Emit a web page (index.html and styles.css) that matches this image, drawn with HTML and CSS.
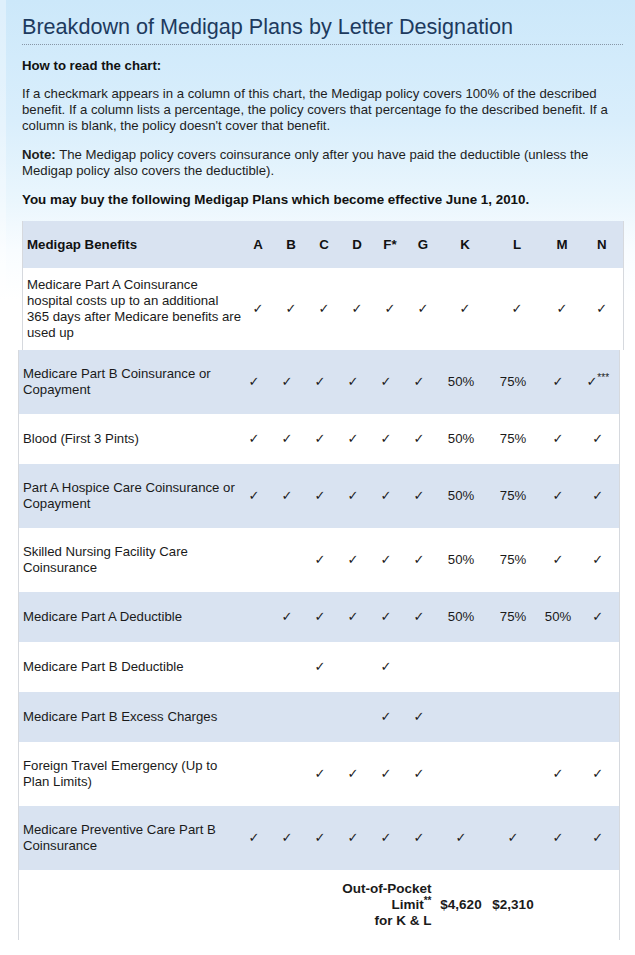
FILE: index.html
```html
<!DOCTYPE html>
<html>
<head>
<meta charset="utf-8">
<title>Breakdown of Medigap Plans by Letter Designation</title>
<link rel="stylesheet" href="styles.css">
</head>
<body>
<div class="page">
  <h1 class="title">Breakdown of Medigap Plans by Letter Designation</h1>
  <p class="lead">How to read the chart:</p>
  <p class="para">If a checkmark appears in a column of this chart, the Medigap policy covers 100% of the described<br>benefit. If a column lists a percentage, the policy covers that percentage fo the described benefit. If a<br>column is blank, the policy doesn't cover that benefit.</p>
  <p class="para note"><b>Note:</b> The Medigap policy covers coinsurance only after you have paid the deductible (unless the<br>Medigap policy also covers the deductible).</p>
  <p class="avail">You may buy the following Medigap Plans which become effective June 1, 2010.</p>

  <table class="chart chart-top">
    <colgroup><col class="c-label"><col class="c-s"><col class="c-s"><col class="c-s"><col class="c-s"><col class="c-s"><col class="c-s"><col class="c-k"><col class="c-l"><col class="c-m"><col class="c-n"></colgroup>
    <tr class="hdr">
      <th class="label">Medigap Benefits</th><th>A</th><th>B</th><th>C</th><th>D</th><th>F*</th><th>G</th><th>K</th><th>L</th><th>M</th><th>N</th>
    </tr>
    <tr class="white r-first">
      <td class="label">Medicare Part A Coinsurance<br>hospital costs up to an additional<br>365 days after Medicare benefits are<br>used up</td>
      <td class="ck">✓</td><td class="ck">✓</td><td class="ck">✓</td><td class="ck">✓</td><td class="ck">✓</td><td class="ck">✓</td><td class="ck">✓</td><td class="ck">✓</td><td class="ck">✓</td><td class="ck">✓</td>
    </tr>
  </table>

  <table class="chart chart-main">
    <colgroup><col class="c-label"><col class="c-s"><col class="c-s"><col class="c-s"><col class="c-s"><col class="c-s"><col class="c-s"><col class="c-k"><col class="c-l"><col class="c-m"><col class="c-n"></colgroup>
    <tr class="blue tall">
      <td class="label">Medicare Part B Coinsurance or<br>Copayment</td>
      <td class="ck">✓</td><td class="ck">✓</td><td class="ck">✓</td><td class="ck">✓</td><td class="ck">✓</td><td class="ck">✓</td><td>50%</td><td>75%</td><td class="ck">✓</td><td class="ck">✓<sup class="ast">***</sup></td>
    </tr>
    <tr class="white">
      <td class="label">Blood (First 3 Pints)</td>
      <td class="ck">✓</td><td class="ck">✓</td><td class="ck">✓</td><td class="ck">✓</td><td class="ck">✓</td><td class="ck">✓</td><td>50%</td><td>75%</td><td class="ck">✓</td><td class="ck">✓</td>
    </tr>
    <tr class="blue tall">
      <td class="label">Part A Hospice Care Coinsurance or<br>Copayment</td>
      <td class="ck">✓</td><td class="ck">✓</td><td class="ck">✓</td><td class="ck">✓</td><td class="ck">✓</td><td class="ck">✓</td><td>50%</td><td>75%</td><td class="ck">✓</td><td class="ck">✓</td>
    </tr>
    <tr class="white tall">
      <td class="label">Skilled Nursing Facility Care<br>Coinsurance</td>
      <td></td><td></td><td class="ck">✓</td><td class="ck">✓</td><td class="ck">✓</td><td class="ck">✓</td><td>50%</td><td>75%</td><td class="ck">✓</td><td class="ck">✓</td>
    </tr>
    <tr class="blue">
      <td class="label">Medicare Part A Deductible</td>
      <td></td><td class="ck">✓</td><td class="ck">✓</td><td class="ck">✓</td><td class="ck">✓</td><td class="ck">✓</td><td>50%</td><td>75%</td><td>50%</td><td class="ck">✓</td>
    </tr>
    <tr class="white">
      <td class="label">Medicare Part B Deductible</td>
      <td></td><td></td><td class="ck">✓</td><td></td><td class="ck">✓</td><td></td><td></td><td></td><td></td><td></td>
    </tr>
    <tr class="blue">
      <td class="label">Medicare Part B Excess Charges</td>
      <td></td><td></td><td></td><td></td><td class="ck">✓</td><td class="ck">✓</td><td></td><td></td><td></td><td></td>
    </tr>
    <tr class="white tall">
      <td class="label">Foreign Travel Emergency (Up to<br>Plan Limits)</td>
      <td></td><td></td><td class="ck">✓</td><td class="ck">✓</td><td class="ck">✓</td><td class="ck">✓</td><td></td><td></td><td class="ck">✓</td><td class="ck">✓</td>
    </tr>
    <tr class="blue tall">
      <td class="label">Medicare Preventive Care Part B<br>Coinsurance</td>
      <td class="ck">✓</td><td class="ck">✓</td><td class="ck">✓</td><td class="ck">✓</td><td class="ck">✓</td><td class="ck">✓</td><td class="ck">✓</td><td class="ck">✓</td><td class="ck">✓</td><td class="ck">✓</td>
    </tr>
    <tr class="white r-last">
      <td class="oop" colspan="7">Out-of-Pocket<br>Limit<sup class="ast">**</sup><br>for K &amp; L</td>
      <td class="money">$4,620</td><td class="money">$2,310</td><td></td><td></td>
    </tr>
  </table>
</div>
</body>
</html>
```

FILE: styles.css
```css
html {
  background: #fff;
}
body {
  margin: 0;
  background: linear-gradient(to bottom, #cce8fa 0px, #d9eefc 120px, #eaf6fd 200px, #f8fcff 250px, #ffffff 300px) no-repeat;
  font-family: "Liberation Sans", Arial, sans-serif;
  color: #1a1a1a;
}
.page {
  border-left: 6px solid rgba(255, 255, 255, 0.35);
  padding: 12px 0 0 16px;
  min-height: 955px;
  box-sizing: border-box;
}
.title {
  margin: 0;
  width: 601px;
  font-size: 21.6px;
  line-height: 30px;
  font-weight: normal;
  color: #1d3a5e;
  padding-bottom: 2px;
  border-bottom: 1px dotted #8796a6;
  white-space: nowrap;
}
.lead {
  margin: 13px 0 0;
  font-size: 13.2px;
  line-height: 16px;
  font-weight: bold;
  color: #111;
}
.para {
  margin: 12px 0 0;
  font-size: 13.2px;
  line-height: 16px;
  white-space: nowrap;
  color: #1e1e1e;
}
.note {
  margin-top: 13px;
}
.avail {
  margin: 13px 0 0;
  font-size: 13.4px;
  line-height: 16px;
  font-weight: bold;
  white-space: nowrap;
  color: #111;
}

.chart {
  border-collapse: collapse;
  table-layout: fixed;
  width: 601px;
  font-size: 13.2px;
  line-height: 16px;
}
.chart-top {
  margin-top: 13px;
}
.chart-main {
  margin-left: -4px;
}
.c-label { width: 219px; }
.c-s { width: 33px; }
.c-k { width: 51px; }
.c-l { width: 53px; }
.c-m { width: 37px; }
.c-n { width: 43px; }

.chart th,
.chart td {
  padding: 0;
  text-align: center;
  vertical-align: middle;
  white-space: nowrap;
  color: #1a1a1a;
}
.chart td:first-child,
.chart th:first-child {
  border-left: 1px solid #d6d9de;
}
.chart td:last-child,
.chart th:last-child {
  border-right: 1px solid #d6d9de;
}
.chart .label {
  text-align: left;
  padding-left: 4px;
}
.ck {
  font-family: "DejaVu Sans", sans-serif;
  font-size: 13px;
  color: #222;
}
.hdr {
  height: 47px;
  background: #d9e3f1;
}
.hdr th {
  font-size: 13.3px;
  font-weight: bold;
  color: #111;
  border-color: #d9e3f1;
}
.white {
  background: #fff;
  height: 50px;
}
.blue {
  background: #d9e3f1;
  height: 50px;
}
.tall {
  height: 64px;
}
.r-first {
  height: 82px;
}
.r-last {
  height: 70px;
}
.ast {
  font-family: "Liberation Sans", Arial, sans-serif;
  font-size: 10px;
  line-height: 0;
  vertical-align: 5px;
}
.oop {
  text-align: right !important;
  padding-right: 4px !important;
  font-weight: bold;
  font-size: 13.5px;
}
.money {
  font-weight: bold;
  font-size: 13.5px;
}
```
